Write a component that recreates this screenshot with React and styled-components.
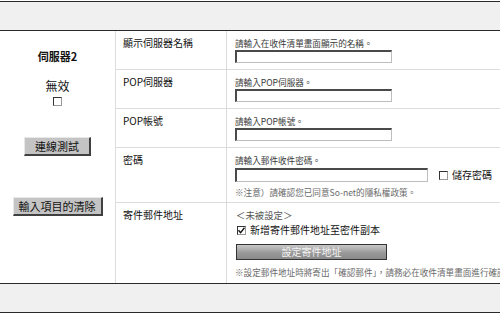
import styled, { createGlobalStyle } from "styled-components";

const GlobalStyle = createGlobalStyle`
  html, body {
    margin: 0;
    padding: 0;
    background: #fff;
  }
  body {
    font-family: "Noto Sans CJK TC", "Noto Sans CJK JP", sans-serif;
    color: #111;
  }
`;

const Page = styled.div`
  width: 500px;
  height: 314px;
  overflow: hidden;
  padding-top: 1px;
  box-sizing: border-box;
`;

const Bar = styled.div`
  height: 28px;
  background: #f0f0f0;
  border-top: 1px solid #2a2a2a;
  border-bottom: 1px solid #2a2a2a;
`;

const Form = styled.div`
  display: grid;
  grid-template-columns: 116px 111px minmax(0, 1fr);
  grid-template-rows: 39px 39px 39px 55px 80px;
`;

const Side = styled.div`
  grid-row: 1 / -1;
  border-right: 1px solid #dcdcdc;
  display: flex;
  flex-direction: column;
  align-items: center;
`;

const ServerName = styled.div`
  margin-top: 18px;
  font-size: 11px;
  line-height: 14px;
  font-weight: 700;
`;

const Disabled = styled.div`
  margin-top: 16px;
  font-size: 12px;
  line-height: 14px;
`;

const Box = styled.span`
  display: inline-flex;
  align-items: center;
  justify-content: center;
  flex: none;
  width: 9px;
  height: 9px;
  box-sizing: border-box;
  background: #fff;
  border: 1px solid #9a9a9a;
  border-top-color: #333;
  border-left-color: #333;
  margin-top: ${(p) => p.$top || 0}px;
`;

const SideButton = styled.button`
  margin-top: ${(p) => p.$top}px;
  height: 19px;
  padding: 0 ${(p) => p.$pad}px;
  font-family: inherit;
  font-size: 11px;
  line-height: 14px;
  color: #111;
  background: #c4c4c4;
  border: 1px solid #e8e8e8;
  border-right: 2px solid #404040;
  border-bottom: 2px solid #404040;
  cursor: pointer;
`;

const Label = styled.div`
  padding: 5px 0 0 7px;
  font-size: 10px;
  line-height: 14px;
  border-right: 1px solid #dcdcdc;
  border-bottom: ${(p) => (p.$last ? "none" : "1px solid #dcdcdc")};
`;

const Field = styled.div`
  padding: 6px 0 0 8px;
  overflow: hidden;
  white-space: nowrap;
  border-bottom: ${(p) => (p.$last ? "none" : "1px solid #dcdcdc")};
`;

const Hint = styled.div`
  font-size: 8.6px;
  line-height: 12px;
  color: ${(p) => (p.$soft ? "#6a6a6a" : "#3a3a3a")};
  margin-top: ${(p) => p.$top || 0}px;
`;

const Input = styled.div`
  width: ${(p) => p.$w}px;
  height: ${(p) => p.$h || 13}px;
  margin-top: 1px;
  box-sizing: border-box;
  background: #fff;
  border: 1px solid #bdbdbd;
  border-top: 2px solid #4a4a4a;
  border-left: 2px solid #4a4a4a;
`;

const Inline = styled.div`
  display: flex;
  align-items: center;
  gap: ${(p) => p.$gap}px;
  margin-top: ${(p) => p.$top || 0}px;
`;

const BoxText = styled.span`
  font-size: 10px;
  line-height: 14px;
  color: #111;
`;

const Unset = styled.div`
  font-size: 9.4px;
  line-height: 12px;
  color: #555;
  padding-left: 1px;
`;

const WideButton = styled.button`
  display: block;
  margin-top: 7px;
  margin-left: 1px;
  width: 151px;
  height: 16px;
  padding: 0;
  font-family: inherit;
  font-size: 10px;
  line-height: 12px;
  color: #f4f4f4;
  background: linear-gradient(#c8c8c8, #9a9a9a 55%, #8a8a8a);
  border: 1px solid #333;
  cursor: pointer;
`;

function Check() {
  return (
    <svg width="7" height="7" viewBox="0 0 7 7">
      <path d="M0.5 3.2 L2.6 5.6 L6.5 0.8" fill="none" stroke="#111" strokeWidth="1.4" />
    </svg>
  );
}

export default function App() {
  return (
    <Page>
      <GlobalStyle />
      <Bar />
      <Form>
        <Side>
          <ServerName>伺服器2</ServerName>
          <Disabled>無效</Disabled>
          <Box $top={4} />
          <SideButton $top={31} $pad={10}>連線測試</SideButton>
          <SideButton $top={41} $pad={5}>輸入項目的清除</SideButton>
        </Side>

        <Label>顯示伺服器名稱</Label>
        <Field>
          <Hint>請輸入在收件清單畫面顯示的名稱。</Hint>
          <Input $w={157} />
        </Field>

        <Label>POP伺服器</Label>
        <Field>
          <Hint>請輸入POP伺服器。</Hint>
          <Input $w={157} />
        </Field>

        <Label>POP帳號</Label>
        <Field>
          <Hint>請輸入POP帳號。</Hint>
          <Input $w={157} />
        </Field>

        <Label>密碼</Label>
        <Field>
          <Hint>請輸入郵件收件密碼。</Hint>
          <Inline $gap={11}>
            <Input $w={193} $h={14} />
            <Inline $gap={4} $top={2}>
              <Box />
              <BoxText>儲存密碼</BoxText>
            </Inline>
          </Inline>
          <Hint $soft $top={4}>※注意）請確認您已同意So-net的隱私權政策。</Hint>
        </Field>

        <Label $last>寄件郵件地址</Label>
        <Field $last>
          <Unset>＜未被設定＞</Unset>
          <Inline $gap={4} $top={2}>
            <Box style={{ marginLeft: 2 }}>
              <Check />
            </Box>
            <BoxText>新增寄件郵件地址至密件副本</BoxText>
          </Inline>
          <WideButton>設定寄件地址</WideButton>
          <Hint $soft $top={6}>※設定郵件地址時將寄出「確認郵件」，請務必在收件清單畫面進行確認。</Hint>
        </Field>
      </Form>
      <Bar />
    </Page>
  );
}
